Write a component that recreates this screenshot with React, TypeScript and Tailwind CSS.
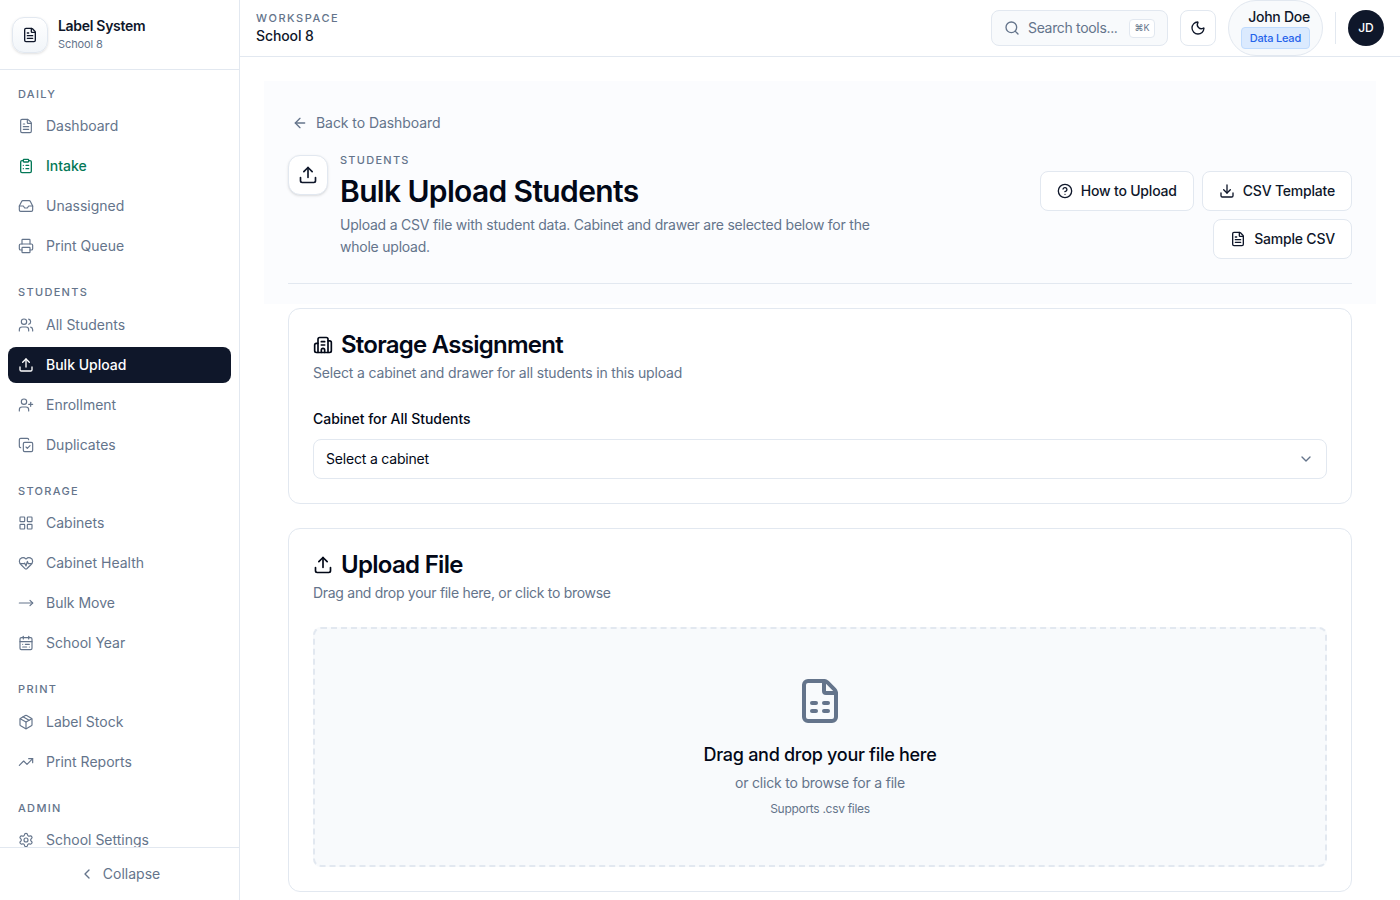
import React from 'react';
import {
  ArrowLeft, Building2, CalendarRange, ChevronDown, ChevronLeft, CircleHelp, ClipboardList, CopyCheck, Download,
  FileSpreadsheet, FileText, HeartPulse, Inbox, LayoutGrid, Moon, MoveRight, Package, Printer, Search, Settings,
  TrendingUp, Upload, UserPlus, Users,
} from 'lucide-react';

const sections = [
  {
    title: 'DAILY',
    items: [
      { label: 'Dashboard', icon: FileText },
      { label: 'Intake', icon: ClipboardList, tone: 'green' },
      { label: 'Unassigned', icon: Inbox },
      { label: 'Print Queue', icon: Printer },
    ],
  },
  {
    title: 'STUDENTS',
    items: [
      { label: 'All Students', icon: Users },
      { label: 'Bulk Upload', icon: Upload, tone: 'active' },
      { label: 'Enrollment', icon: UserPlus },
      { label: 'Duplicates', icon: CopyCheck },
    ],
  },
  {
    title: 'STORAGE',
    items: [
      { label: 'Cabinets', icon: LayoutGrid },
      { label: 'Cabinet Health', icon: HeartPulse },
      { label: 'Bulk Move', icon: MoveRight },
      { label: 'School Year', icon: CalendarRange },
    ],
  },
  {
    title: 'PRINT',
    items: [
      { label: 'Label Stock', icon: Package },
      { label: 'Print Reports', icon: TrendingUp },
    ],
  },
  {
    title: 'ADMIN',
    items: [{ label: 'School Settings', icon: Settings }],
  },
];

const Sidebar = () => (
  <aside className="flex h-full w-[240px] shrink-0 flex-col border-r border-[#e2e8f0] bg-white">
    <div className="flex h-[70px] shrink-0 items-center gap-[10px] border-b border-[#e2e8f0] px-3">
      <div className="flex h-9 w-9 items-center justify-center rounded-xl border border-[#e2e8f0] bg-gradient-to-b from-white to-[#f1f5f9] shadow-sm">
        <FileText className="h-4 w-4 text-[#0f172a]" />
      </div>
      <div className="pb-0.5">
        <div className="text-sm leading-5 font-semibold tracking-[-0.3px] text-[#0f172a]">Label System</div>
        <div className="text-[11px] leading-4 tracking-[-0.1px] text-[#64748b]">School 8</div>
      </div>
    </div>
    <nav className="min-h-0 flex-1 overflow-hidden px-2 pt-[15.75px]">
      {sections.map(section => (
        <div key={section.title} className="mb-5">
          <div className="mb-1.5 px-2.5 text-[11px] leading-[16.5px] font-medium tracking-[0.12em] text-[#64748b]">{section.title}</div>
          <div className="flex flex-col gap-1">
            {section.items.map(item => {
              const Icon = item.icon;
              return (
                <div
                  key={item.label}
                  className={
                    item.tone === 'active'
                      ? 'flex h-9 items-center gap-3 rounded-lg bg-[#0f172a] px-2.5 text-sm font-medium text-white'
                      : item.tone === 'green'
                        ? 'flex h-9 items-center gap-3 rounded-lg px-2.5 text-sm font-medium text-[#047857]'
                        : 'flex h-9 items-center gap-3 rounded-lg px-2.5 text-sm text-[#64748b]'
                  }
                >
                  <Icon className="h-4 w-4 shrink-0" strokeWidth={item.tone ? 2 : 1.75} />
                  <span>{item.label}</span>
                </div>
              );
            })}
          </div>
        </div>
      ))}
    </nav>
    <div className="flex h-[53px] shrink-0 items-center justify-center gap-2 border-t border-[#e2e8f0] text-sm text-[#64748b]">
      <ChevronLeft className="h-4 w-4" />
      <span>Collapse</span>
    </div>
  </aside>
);

const Topbar = () => (
  <header className="flex h-[57px] shrink-0 items-center justify-between border-b border-[#e2e8f0] bg-white px-4">
    <div>
      <div className="text-[11px] leading-4 font-medium tracking-[0.14em] text-[#64748b]">WORKSPACE</div>
      <div className="text-sm leading-5 font-medium tracking-[-0.1px] text-[#0f172a]">School 8</div>
    </div>
    <div className="flex items-center">
      <div className="flex h-9 w-[177px] items-center rounded-lg border border-[#e2e8f0] bg-[#f8fafc] px-3">
        <Search className="h-4 w-4 text-[#64748b]" />
        <span className="ml-2 text-sm tracking-[-0.33px] text-[#64748b]">Search tools...</span>
        <span className="ml-auto flex h-[19px] w-[26px] items-center justify-center rounded border border-[#e2e8f0] bg-white text-[9px] text-[#64748b]">⌘K</span>
      </div>
      <div className="ml-3 flex h-9 w-9 items-center justify-center rounded-lg border border-[#e2e8f0] bg-white">
        <Moon className="h-4 w-4 text-[#0f172a]" />
      </div>
      <div className="ml-3 flex h-[56px] w-[95px] flex-col items-end justify-center rounded-full border border-[#e2e8f0] bg-[#f8fafc] pr-3">
        <div className="text-sm leading-5 font-medium tracking-[-0.25px] text-[#0f172a]">John Doe</div>
        <div className="rounded border border-[#bfdbfe] bg-[#dbeafe] px-2 text-[11px] leading-[20px] font-medium tracking-[-0.2px] text-[#2563eb]">Data Lead</div>
      </div>
      <div className="mx-3 h-8 w-px bg-[#e2e8f0]" />
      <div className="flex h-9 w-9 items-center justify-center rounded-full bg-[#0f172a] text-xs font-medium text-white">JD</div>
    </div>
  </header>
);

const OutlineButton = ({ icon: Icon, label }: { icon: typeof Upload; label: string }) => (
  <div className="flex h-10 items-center gap-2 rounded-lg border border-[#e2e8f0] bg-white px-4 text-sm font-medium tracking-[-0.2px] text-[#0f172a]">
    <Icon className="h-4 w-4" />
    <span>{label}</span>
  </div>
);

export default function App() {
  return (
    <div className="flex h-[900px] w-[1400px] overflow-hidden bg-white font-['Inter',sans-serif]">
      <Sidebar />
      <div className="flex min-w-0 flex-1 flex-col">
        <Topbar />
        <main className="min-h-0 flex-1 overflow-hidden px-6 pt-6">
          <section className="mb-1 bg-[#fbfcfe] px-6 pt-6 pb-5">
            <div className="flex h-9 items-center gap-2 pl-1 text-sm tracking-[-0.06px] text-[#64748b]">
              <ArrowLeft className="h-4 w-4" />
              <span>Back to Dashboard</span>
            </div>
            <div className="mt-[11px] flex items-start justify-between border-b border-[#e2e8f0] pb-6">
              <div className="flex gap-3">
                <div className="mt-[3px] flex h-10 w-10 shrink-0 items-center justify-center rounded-xl border border-[#e2e8f0] bg-white shadow-sm">
                  <Upload className="h-5 w-5 text-[#0f172a]" />
                </div>
                <div className="w-[560px]">
                  <div className="text-[11px] leading-4 font-medium tracking-[0.115em] text-[#64748b]">STUDENTS</div>
                  <h1 className="mt-[5px] text-3xl leading-9 font-semibold tracking-[-0.65px] text-[#020817]">Bulk Upload Students</h1>
                  <p className="mt-[5px] text-sm leading-[22px] tracking-[-0.23px] text-[#64748b]">Upload a CSV file with student data. Cabinet and drawer are selected below for the whole upload.</p>
                </div>
              </div>
              <div className="mt-[19px] flex w-[320px] flex-wrap justify-end gap-2">
                <OutlineButton icon={CircleHelp} label="How to Upload" />
                <OutlineButton icon={Download} label="CSV Template" />
                <OutlineButton icon={FileText} label="Sample CSV" />
              </div>
            </div>
          </section>

          <section className="mx-6 rounded-xl border border-[#e2e8f0] bg-white px-6 pt-[22px] pb-6">
            <div className="flex items-center gap-2">
              <Building2 className="h-5 w-5 text-[#020817]" />
              <h2 className="text-2xl leading-7 font-semibold tracking-[-0.75px] text-[#020817]">Storage Assignment</h2>
            </div>
            <p className="mt-1 text-sm leading-5 tracking-[-0.17px] text-[#64748b]">Select a cabinet and drawer for all students in this upload</p>
            <div className="mt-[26px] text-sm leading-5 font-medium tracking-[-0.04px] text-[#020817]">Cabinet for All Students</div>
            <div className="mt-[10px] flex h-10 items-center justify-between rounded-lg border border-[#e2e8f0] bg-white px-3 text-sm tracking-[-0.19px] text-[#020817]">
              <span>Select a cabinet</span>
              <ChevronDown className="h-4 w-4 text-[#64748b]" />
            </div>
          </section>

          <section className="mx-6 mt-6 rounded-xl border border-[#e2e8f0] bg-white px-6 pt-[22px] pb-6">
            <div className="flex items-center gap-2">
              <Upload className="h-5 w-5 text-[#020817]" />
              <h2 className="text-2xl leading-7 font-semibold tracking-[-0.7px] text-[#020817]">Upload File</h2>
            </div>
            <p className="mt-1 text-sm leading-5 tracking-[-0.29px] text-[#64748b]">Drag and drop your file here, or click to browse</p>
            <div className="mt-6 flex h-[240px] flex-col items-center rounded-lg border-2 border-dashed border-[#e2e8f0] bg-[#f8fafc] pt-12">
              <FileSpreadsheet className="h-12 w-12 text-[#64748b]" />
              <div className="mt-4 text-lg leading-7 font-medium tracking-[-0.29px] text-[#020817]">Drag and drop your file here</div>
              <div className="mt-1 text-sm leading-5 tracking-[-0.2px] text-[#64748b]">or click to browse for a file</div>
              <div className="mt-2 text-xs leading-4 tracking-[-0.3px] text-[#64748b]">Supports .csv files</div>
            </div>
          </section>
        </main>
      </div>
    </div>
  );
}
